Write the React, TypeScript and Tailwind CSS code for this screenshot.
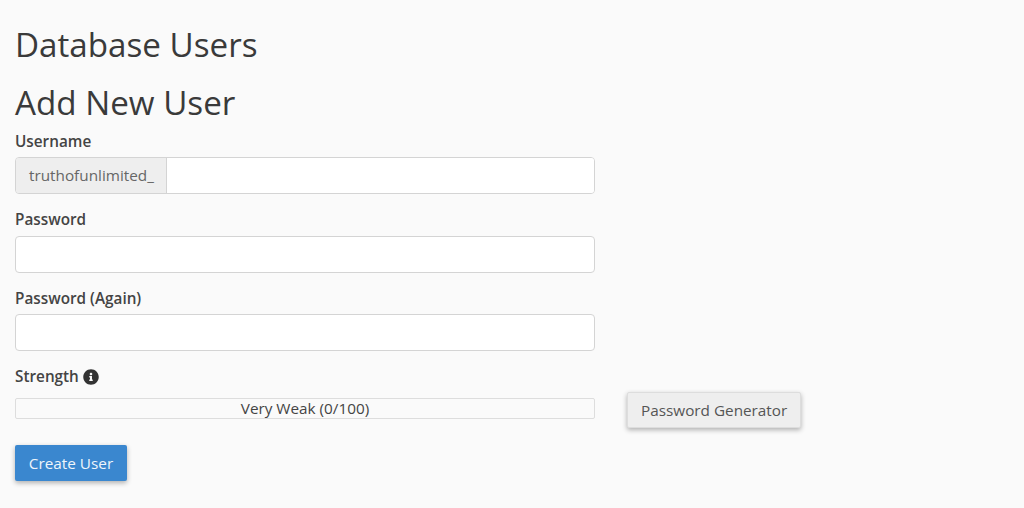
import { FaInfoCircle } from 'react-icons/fa';

function Label({ text }: { text: string }) {
  return <label className="block text-[15.3px] leading-[21px] font-semibold text-[#444]">{text}</label>;
}

function TextBox() {
  return <input type="text" className="block w-[580px] h-[37px] bg-white border border-[#d4d4d4] rounded-[4px]" />;
}

export default function App() {
  return (
    <div className="h-[508px] bg-[#fafafa] pl-[15px] pt-[24px] font-['Open_Sans',sans-serif] text-[#333] overflow-hidden">
      <h1 className="text-[33.2px] leading-[42px] text-[#3a3a3a]">Database Users</h1>
      <h2 className="mt-[16px] text-[33.2px] leading-[42px] text-[#3a3a3a]">Add New User</h2>

      <div className="mt-[7px]">
        <Label text="Username" />
        <div className="mt-[5px] flex w-[580px] h-[37px] border border-[#d4d4d4] rounded-[4px] overflow-hidden">
          <span className="flex items-center pl-[13px] pr-[12px] bg-[#eee] border-r border-[#d4d4d4] text-[15.3px] text-[#666]">truthofunlimited_</span>
          <input type="text" className="flex-1 bg-white" />
        </div>
      </div>

      <div className="mt-[15px] flex flex-col gap-[6px]">
        <Label text="Password" />
        <TextBox />
      </div>

      <div className="mt-[15px] flex flex-col gap-[5px]">
        <Label text="Password (Again)" />
        <TextBox />
      </div>

      <div className="mt-[15px] flex items-center gap-[4px]">
        <Label text="Strength" />
        <FaInfoCircle className="text-[16px] text-[#333]" />
      </div>

      <div className="mt-[5px] flex items-start">
        <div className="mt-[6px] w-[580px] h-[21px] pb-[1px] border border-[#ddd] rounded-[2px] flex items-center justify-center text-[15.3px] text-[#444]">Very Weak (0/100)</div>
        <button className="ml-[32px] h-[36px] px-[13px] bg-[#eee] border border-[#ddd] rounded-[2px] text-[15.3px] text-[#555] shadow-[0_2px_5px_rgba(0,0,0,0.3)]">Password Generator</button>
      </div>

      <button className="mt-[17px] h-[36px] w-[112px] bg-[#3a87cf] rounded-[2px] text-[15.3px] text-[#eef5fb] shadow-[0_2px_5px_rgba(0,0,0,0.3)]">Create User</button>
    </div>
  );
}
